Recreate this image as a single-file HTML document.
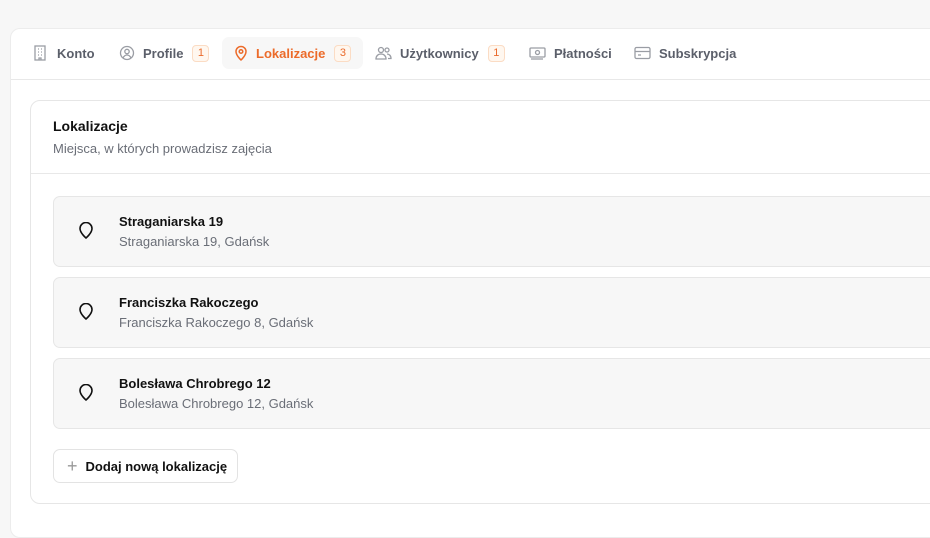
<!DOCTYPE html>
<html><head><meta charset="utf-8"><style>
*{box-sizing:border-box;margin:0;padding:0}
body{width:930px;height:523px;overflow:hidden;background:#f7f7f7;font-family:"Liberation Sans",sans-serif;color:#111}
.outer{position:absolute;left:10px;top:28px;width:940px;height:510px;background:#fff;border:1px solid #ececec;border-radius:10px}
.tabs{height:51px;border-bottom:1px solid #e8e8e8;position:relative}
.tab{position:absolute;top:8px;height:32px;display:flex;align-items:center;font-size:13px;color:#5b5f6a;font-weight:600}
.tab svg{margin-right:8px}
.badge{display:inline-block;margin-left:9px;width:17px;height:17px;border:1px solid #fbdcc4;background:#fff7ef;border-radius:4px;color:#ea6a2b;font-size:11px;text-align:center;line-height:15px;font-weight:400}
.active{background:#f7f7f7;border-radius:7px;color:#ec6b2a;padding:0 12px;left:211px}
.card{position:absolute;left:19px;top:71px;width:930px;height:404px;border:1px solid #e6e6e6;border-radius:10px}
.hd{height:73px;border-bottom:1px solid #e8e8e8;padding:17px 22px}
.hd h3{font-size:14px;font-weight:700;margin-bottom:7px}
.hd p{font-size:13px;color:#6a6e77}
.item{position:absolute;left:22px;width:900px;height:71px;background:#f7f7f7;border:1px solid #e6e6e6;border-radius:7px}
.item svg{position:absolute;left:24px;top:25px}
.item b{position:absolute;left:65px;top:17px;font-size:13px}
.item span{position:absolute;left:65px;top:37px;font-size:13px;color:#6a6e77}
.btn{position:absolute;left:22px;top:348px;width:185px;height:34px;border:1px solid #e3e3e3;border-radius:7px;font-size:13px;font-weight:700;display:flex;align-items:center;padding-left:13px}
.btn i{font-style:normal;color:#999;font-size:18px;font-weight:300;margin-right:8px}
</style></head><body>
<div class="outer">
<div class="tabs">
<div class="tab" style="left:22px"><svg width="14" height="16" viewBox="0 0 14 16" fill="none" stroke="#9a9da4" stroke-width="1.3"><rect x="2" y="1" width="10" height="14"/><path d="M5 4h1M8 4h1M5 7h1M8 7h1M5 10h1M8 10h1M6 15v-2h2v2"/></svg><span style="margin-left:2px">Konto</span></div>
<div class="tab" style="left:108px"><svg width="16" height="16" viewBox="0 0 16 16" fill="none" stroke="#9a9da4" stroke-width="1.3"><circle cx="8" cy="8" r="6.5"/><circle cx="8" cy="6.5" r="2.2"/><path d="M4 13c1-2 2.5-3 4-3s3 1 4 3"/></svg>Profile<span class="badge">1</span></div>
<div class="tab active"><svg width="14" height="16" viewBox="0 0 14 16" fill="none" stroke="#ec6b2a" stroke-width="1.5"><path d="M7 15s5-4.5 5-8.5A5 5 0 0 0 2 6.5C2 10.5 7 15 7 15z"/><circle cx="7" cy="6.5" r="1.8"/></svg>Lokalizacje<span class="badge">3</span></div>
<div class="tab" style="left:364px"><svg width="17" height="16" viewBox="0 0 17 16" fill="none" stroke="#9a9da4" stroke-width="1.3"><circle cx="6" cy="5" r="2.5"/><path d="M1 14c0-3 2-5 5-5s5 2 5 5z"/><circle cx="12" cy="5" r="2"/><path d="M12 9c2 0 4 1.5 4 4.5h-3"/></svg>Użytkownicy<span class="badge">1</span></div>
<div class="tab" style="left:518px"><svg width="17" height="16" viewBox="0 0 17 16" fill="none" stroke="#9a9da4" stroke-width="1.3"><rect x="1" y="3" width="15" height="9" rx="1"/><circle cx="8.5" cy="7.5" r="2"/><path d="M2 14h12"/></svg>Płatności</div>
<div class="tab" style="left:623px"><svg width="17" height="16" viewBox="0 0 17 16" fill="none" stroke="#9a9da4" stroke-width="1.3"><rect x="1" y="2.5" width="15" height="11" rx="1.5"/><path d="M1 6.5h15M4 10h3"/></svg>Subskrypcja</div>
</div>
<div class="card">
<div class="hd"><h3>Lokalizacje</h3><p>Miejsca, w których prowadzisz zajęcia</p></div>
<div class="item" style="top:95px"><svg width="16" height="18" viewBox="0 0 16 18" fill="none" stroke="#111" stroke-width="1.6"><path d="M8 16s6-5 6-9.5A6 6 0 0 0 2 6.5C2 11 8 16 8 16z"/></svg><b>Straganiarska 19</b><span>Straganiarska 19, Gdańsk</span></div>
<div class="item" style="top:176px"><svg width="16" height="18" viewBox="0 0 16 18" fill="none" stroke="#111" stroke-width="1.6"><path d="M8 16s6-5 6-9.5A6 6 0 0 0 2 6.5C2 11 8 16 8 16z"/></svg><b>Franciszka Rakoczego</b><span>Franciszka Rakoczego 8, Gdańsk</span></div>
<div class="item" style="top:257px"><svg width="16" height="18" viewBox="0 0 16 18" fill="none" stroke="#111" stroke-width="1.6"><path d="M8 16s6-5 6-9.5A6 6 0 0 0 2 6.5C2 11 8 16 8 16z"/></svg><b>Bolesława Chrobrego 12</b><span>Bolesława Chrobrego 12, Gdańsk</span></div>
<div class="btn"><i>+</i>Dodaj nową lokalizację</div>
</div>
</div>
</body></html>
